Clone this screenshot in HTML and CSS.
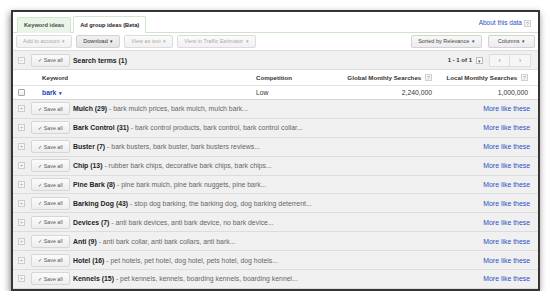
FILE: index.html
```html
<!DOCTYPE html>
<html><head><meta charset="utf-8">
<title>Ad group ideas</title>
<link rel="stylesheet" href="styles.css">
</head>
<body>

<div class="frame">
  <div class="tabBar">
    <div class="tab">Keyword ideas</div>
    <div class="tab tabOn">Ad group ideas (Beta)</div>
    <div class="about"><a>About this data</a><span class="help">?</span></div>
  </div>

  <div class="toolbar">
    <button class="btn btnOff">Add to account <span class="arr">&#9662;</span></button>
    <button class="btn btnDl">Download <span class="arr">&#9662;</span></button>
    <button class="btn btnOff">View as text <span class="arr">&#9662;</span></button>
    <button class="btn btnOff">View in Traffic Estimator <span class="arr">&#9662;</span></button>
    <div class="spacer"></div>
    <button class="btn btnOn">Sorted by Relevance <span class="arr">&#9662;</span></button>
    <button class="btn btnOn btnCols">Columns <span class="arr">&#9662;</span></button>
  </div>

  <div class="searchRow">
    <span class="toggle">&minus;</span>
    <button class="save">&#10003; Save all</button>
    <span class="title">Search terms (1)</span>
    <div class="spacer"></div>
    <span class="pageInfo">1 - 1 of 1</span>
    <span class="pageMenu">&#9662;</span>
    <div class="pager"><span>&lsaquo;</span><span>&rsaquo;</span></div>
  </div>

  <div class="grid headRow">
    <div></div>
    <div>Keyword</div>
    <div>Competition</div>
    <div class="num">Global Monthly Searches <span class="help">?</span></div>
    <div class="num">Local Monthly Searches <span class="help">?</span></div>
  </div>
  <div class="grid termRow">
    <div><span class="check"></span></div>
    <div><a class="term">bark <span class="arr">&#9662;</span></a></div>
    <div>Low</div>
    <div class="num">2,240,000</div>
    <div class="num">1,000,000</div>
  </div>

  <div id="groups"></div>
</div>

<script>
// ad groups shown under the search term
const groups = [
  ['Mulch (29)', 'bark mulch prices, bark mulch, mulch bark...'],
  ['Bark Control (31)', 'bark control products, bark control, bark control collar...'],
  ['Buster (7)', 'bark busters, bark buster, bark busters reviews...'],
  ['Chip (13)', 'rubber bark chips, decorative bark chips, bark chips...'],
  ['Pine Bark (8)', 'pine bark mulch, pine bark nuggets, pine bark...'],
  ['Barking Dog (43)', 'stop dog barking, the barking dog, dog barking deterrent...'],
  ['Devices (7)', 'anti bark devices, anti bark device, no bark device...'],
  ['Anti (9)', 'anti bark collar, anti bark collars, anti bark...'],
  ['Hotel (16)', 'pet hotels, pet hotel, dog hotel, pets hotel, dog hotels...'],
  ['Kennels (15)', 'pet kennels, kennels, boarding kennels, boarding kennel...']
];

const main = () => {
  const list = document.getElementById('groups');
  groups.forEach(([name, words]) => {
    const row = document.createElement('div');
    row.className = 'groupRow';
    row.innerHTML = `<span class="toggle">+</span>
      <button class="save">&#10003; Save all</button>
      <span class="title">${name}</span><span class="words">&nbsp;- ${words}</span>
      <div class="spacer"></div>
      <a class="more">More like these</a>`;
    list.appendChild(row);
  });
};

main();
</script>

</body></html>
```

FILE: styles.css
```css
body {
  margin: 0;
  background-color: #ffffff;
  font-family: "Liberation Sans", Arial, sans-serif;
}
.frame {
  box-sizing: border-box;
  width: 529px;
  height: 281px;
  margin: 10px 0 0 11px;
  border: 2px solid #353535;
  background-color: #f0f0f0;
  box-shadow: -1px 3px 7px rgba(0, 0, 0, 0.5);
  overflow: hidden;
  display: flex;
  flex-direction: column;
}
.spacer {
  flex: 1;
}
.arr {
  font-size: 5px;
  margin-left: 1px;
}
.help {
  display: inline-block;
  box-sizing: border-box;
  width: 7px;
  height: 7px;
  line-height: 6px;
  border: 1px solid #d0d0d0;
  background-color: #f6f6f6;
  color: #999999;
  font-size: 5px;
  font-weight: normal;
  text-align: center;
  vertical-align: middle;
  margin-left: 2px;
}

/* tabs */
.tabBar {
  height: 21px;
  box-sizing: border-box;
  background-color: #ffffff;
  border-bottom: 1px solid #cfe3ca;
  display: flex;
  align-items: flex-end;
  padding-left: 4px;
  padding-right: 7px;
}
.tab {
  box-sizing: border-box;
  height: 16px;
  line-height: 14px;
  margin-bottom: -1px;
  margin-right: 2px;
  padding: 0 6px;
  border: 1px solid #d3e6cf;
  border-bottom: none;
  border-radius: 2px 2px 0 0;
  background-color: #eaf4e7;
  color: #4d4d4d;
  font-size: 5.7px;
  font-weight: bold;
}
.tabOn {
  background-color: #ffffff;
  color: #222222;
  height: 17px;
  line-height: 16px;
}
.about {
  margin-left: auto;
  align-self: center;
  margin-top: 2px;
  font-size: 6.5px;
  color: #2a4fc4;
}

/* toolbar */
.toolbar {
  height: 18px;
  box-sizing: border-box;
  background-color: #ffffff;
  border-bottom: 1px solid #dddddd;
  display: flex;
  align-items: center;
  padding: 0 3px 1px 3px;
  gap: 4px;
}
.btn {
  flex: none;
  height: 13px;
  padding: 0 6px;
  border: 1px solid #dcdcdc;
  border-radius: 2px;
  background: linear-gradient(#fbfbfb, #f1f1f1);
  font-family: inherit;
  font-size: 5.5px;
  color: #aaaaaa;
}
.btnDl {
  background: linear-gradient(#f1f1f1, #e4e4e4);
  border-color: #d2d2d2;
  color: #333333;
}
.btnOn {
  background: linear-gradient(#f8f8f8, #ececec);
  border-color: #d2d2d2;
  color: #444444;
  padding: 0 6px;
}
.btnCols {
  margin-left: 2px;
  padding: 0 9px;
}

/* expand toggle and save button */
.toggle {
  box-sizing: border-box;
  width: 7px;
  height: 7px;
  line-height: 5px;
  border: 1px solid #cccccc;
  background-color: #f7f7f7;
  color: #aaaaaa;
  font-size: 6px;
  text-align: center;
  margin: 0 6px 0 5px;
}
.save {
  box-sizing: border-box;
  width: 39px;
  height: 13px;
  padding: 0;
  border: 1px solid #d6d6d6;
  border-radius: 2px;
  background: linear-gradient(#fbfbfb, #ededed);
  font-family: inherit;
  font-size: 5.3px;
  color: #555555;
  margin-right: 3px;
}
.title {
  font-size: 6.9px;
  font-weight: bold;
  color: #222222;
}
.words {
  font-size: 6.9px;
  color: #666666;
  white-space: nowrap;
}

/* search terms row */
.searchRow {
  height: 19px;
  box-sizing: border-box;
  border-bottom: 1px solid #dddddd;
  display: flex;
  align-items: center;
  padding-right: 7px;
}
.pageInfo {
  font-size: 6px;
  font-weight: bold;
  color: #333333;
}
.pageMenu {
  box-sizing: border-box;
  width: 7px;
  height: 7px;
  line-height: 6px;
  border: 1px solid #bbbbbb;
  background-color: #ffffff;
  color: #555555;
  font-size: 5px;
  text-align: center;
  margin: 0 6px 0 4px;
}
.pager {
  display: flex;
  height: 13px;
}
.pager span {
  box-sizing: border-box;
  width: 21px;
  height: 13px;
  line-height: 11px;
  border: 1px solid #dddddd;
  background-color: #f6f6f6;
  color: #999999;
  font-size: 8px;
  text-align: center;
}
.pager span + span {
  border-left: none;
}

/* keyword table */
.grid {
  display: grid;
  grid-template-columns: 29px 214px 1fr 105px 96px;
  padding-right: 10px;
  align-items: center;
  background-color: #ffffff;
  border-bottom: 1px solid #e3e3e3;
  box-sizing: border-box;
}
.num {
  text-align: right;
}
.headRow {
  height: 16px;
  font-size: 6.2px;
  font-weight: bold;
  color: #333333;
}
.termRow {
  height: 14px;
  font-size: 6.8px;
  color: #333333;
  border-bottom: 1px solid #d6d6d6;
}
.check {
  display: block;
  box-sizing: border-box;
  width: 7px;
  height: 7px;
  margin-left: 5px;
  border: 1px solid #a8a8a8;
  border-radius: 1px;
  background: linear-gradient(#ffffff, #ececec);
}
.term {
  color: #2244bb;
  font-weight: bold;
}

/* ad group rows */
.groupRow {
  height: 18.9px;
  box-sizing: border-box;
  border-bottom: 1px solid #dcdcdc;
  display: flex;
  align-items: center;
  padding-right: 8px;
}
.more {
  font-size: 6.9px;
  color: #2a4fc4;
  white-space: nowrap;
}
```
